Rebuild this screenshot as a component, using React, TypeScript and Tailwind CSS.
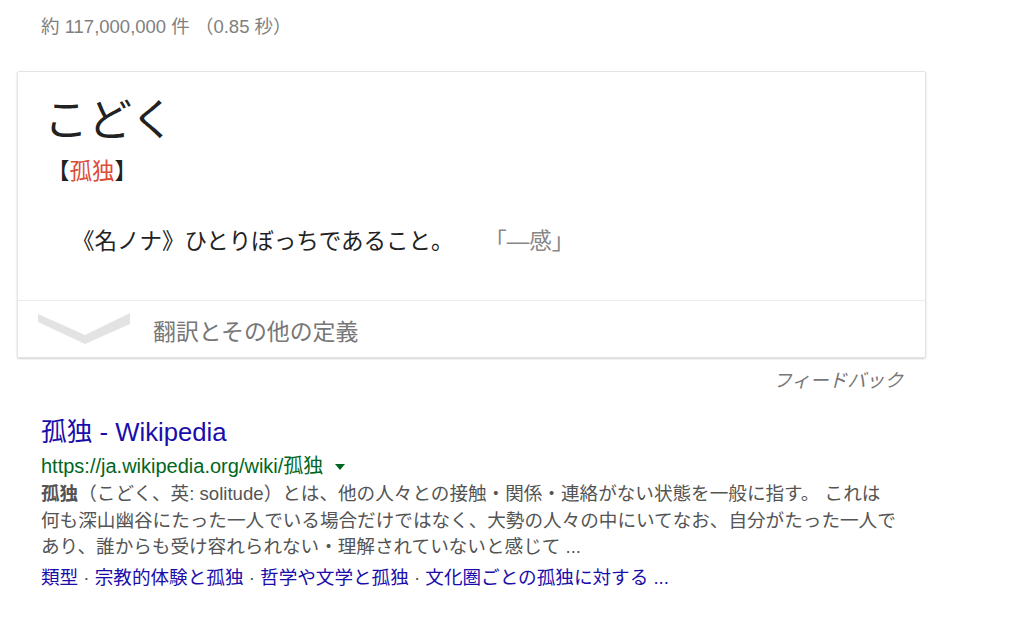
const Chevron = () => (
  <svg width="93" height="32" viewBox="0 0 93 32" className="shrink-0">
    <polygon points="0,1 47,22 92,0 92,11 47,31 0,9" fill="#e3e3e3" />
  </svg>
);

const App = () => {
  return (
    <div className="min-h-[620px] bg-white font-['Liberation_Sans','Noto_Sans_CJK_JP',sans-serif]">
      {/* result stats */}
      <div className="pl-[41px] pt-[16px] text-[18.5px] leading-[22px] text-[#808080] whitespace-nowrap">
        約 117,000,000 件 （0.85 秒）
      </div>

      {/* dictionary card */}
      <div className="ml-[17px] mt-[33px] w-[909px] rounded-[2px] border border-[#e4e4e4] shadow-[0_1px_2px_rgba(0,0,0,0.18)]">
        <div className="h-[228px] pl-[26px] pt-[25px]">
          <div className="text-[44px] leading-[48px] text-[#222]">こどく</div>
          <div className="mt-[15px] pl-[3px] text-[22.5px] leading-[24px] text-[#222]">
            【<span className="text-[#dd4b39]">孤独</span>】
          </div>
          <div className="mt-[44px] pl-[28px] text-[22.5px] leading-[28px] text-[#222] whitespace-nowrap">
            《名ノナ》ひとりぼっちであること。
            <span className="ml-[42px] text-[#878787]">「—感」</span>
          </div>
        </div>
        <div className="flex h-[57px] items-center border-t border-[#ebebeb] pl-[20px]">
          <Chevron />
          <span className="ml-[22px] pt-[6px] text-[22.9px] leading-[28px] text-[#777]">翻訳とその他の定義</span>
        </div>
      </div>

      {/* feedback */}
      <div className="mt-[11px] w-[903px] text-right text-[18.6px] leading-[24px] italic text-[#777]">
        フィードバック
      </div>

      {/* wikipedia result */}
      <div className="mt-[24px] pl-[41px]">
        <div className="text-[25.7px] leading-[30px] text-[#1a0dab] whitespace-nowrap">孤独 - Wikipedia</div>
        <div className="mt-[7px] flex items-center text-[20px] leading-[24px] text-[#006621] whitespace-nowrap">
          https://ja.wikipedia.org/wiki/孤独
          <svg width="10" height="6" viewBox="0 0 10 6" className="ml-[12px] mt-[1px]">
            <polygon points="0,0 10,0 5,6" fill="#006621" />
          </svg>
        </div>
        <div className="mt-[3px] text-[18.6px] leading-[26.5px] text-[#545454] whitespace-nowrap">
          <b>孤独</b>（こどく、英: solitude）とは、他の人々との接触・関係・連絡がない状態を一般に指す。 これは
          <br />
          何も深山幽谷にたった一人でいる場合だけではなく、大勢の人々の中にいてなお、自分がたった一人で
          <br />
          あり、誰からも受け容れられない・理解されていないと感じて ...
        </div>
        <div className="mt-[4px] text-[18.6px] leading-[26px] text-[#1a0dab] whitespace-nowrap">
          類型<span className="text-[#545454]"> · </span>宗教的体験と孤独<span className="text-[#545454]"> · </span>哲学や文学と孤独<span className="text-[#545454]"> · </span>文化圏ごとの孤独に対する ...
        </div>
      </div>
    </div>
  );
};

export default App;
